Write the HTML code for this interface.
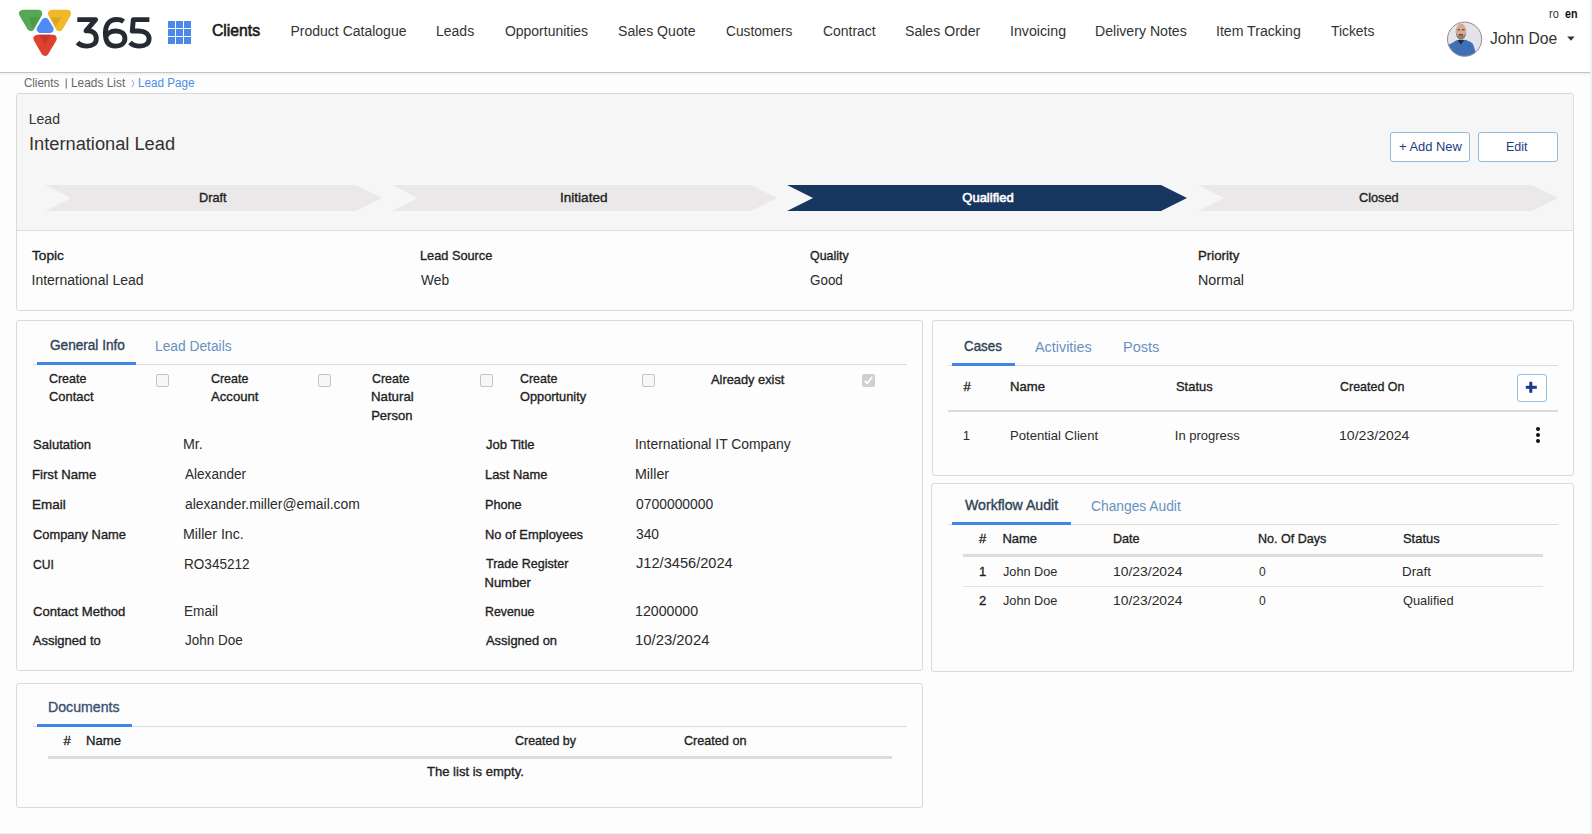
<!DOCTYPE html>
<html><head><meta charset="utf-8"><title>Lead Page</title>
<style>
html,body{margin:0;padding:0;}
body{width:1592px;height:834px;overflow:hidden;position:relative;background:#fdfdfd;font-family:"Liberation Sans",sans-serif;}
.t{position:absolute;white-space:nowrap;line-height:1;transform-origin:0 0;}
.box{position:absolute;box-sizing:border-box;}
.cb{position:absolute;box-sizing:border-box;width:13px;height:13px;background:#f7f7f7;border:1px solid #c4c4c4;border-radius:2px;top:374px;}
</style></head><body>
<!-- header -->
<div class="box" style="left:0;top:0;width:1590px;height:73px;background:#fff;border-bottom:1px solid #c4c4c4;box-shadow:0 1px 3px rgba(0,0,0,.09)"></div>
<div class="box" style="left:1590px;top:0;width:2px;height:834px;background:#e9f4f4"></div>
<div class="box" style="left:0;top:833px;width:1592px;height:1px;background:#e9f4f4"></div>
<svg class="box" style="left:0;top:0" width="200" height="70" viewBox="0 0 200 70">
 <g stroke-linejoin="round" stroke-width="8">
  <polygon points="23.1,13.7 38.2,13.7 30.8,27" fill="#56a856" stroke="#56a856"/>
  <polygon points="52,13.7 67,13.7 59.3,27" fill="#f1b829" stroke="#f1b829"/>
  <polygon points="45.2,21.9 40.8,29 49.6,29" fill="#4e8bf5" stroke="#4e8bf5"/>
  <polygon points="37.5,38.7 52.7,38.7 45,51.8" fill="#de4130" stroke="#de4130"/>
 </g>
 <polygon points="28.8,17.2 39.9,17.2 32.6,28.2" fill="#4d9a4b"/>
 <polygon points="50.4,17.2 61.8,17.2 55.6,27" fill="#dba623"/>
 <polygon points="39,34.8 50.9,34.8 45,44.6" fill="#c9362c"/>
 <g fill="none" stroke="#252a33" stroke-width="4.9" stroke-linejoin="round">
  <path d="M77.3,19.6 H95.6 L86,30.8 H87.4 C93.6,30.8 96.3,34.2 96.3,38.7 C96.3,43.4 92.6,46.1 87,46.1 C82.8,46.1 79.6,44.8 77.5,42.5"/>
  <path d="M123.6,21.4 C121.4,19.8 118.8,19.5 116.4,19.5 C109.2,19.5 105.4,25 105.4,33.5 C105.4,42.5 109.5,46.1 115.3,46.1 C121.3,46.1 124.9,42.8 124.9,38.4 C124.9,33.8 121.3,31 116,31 C110.6,31 106.3,33.8 105.6,38"/>
  <path d="M149.4,19.6 H133.3 L132.3,31 H137.8 C145.3,31 149.1,34.2 149.1,38.7 C149.1,43.4 145.4,46.1 139.7,46.1 C135.5,46.1 132.2,44.8 130,42.5"/>
 </g>
 <g fill="#4a88ea">
  <rect x="168" y="21" width="7" height="7"/><rect x="176" y="21" width="7" height="7"/><rect x="184" y="21" width="7" height="7"/>
  <rect x="168" y="29" width="7" height="7"/><rect x="176" y="29" width="7" height="7"/><rect x="184" y="29" width="7" height="7"/>
  <rect x="168" y="37" width="7" height="7"/><rect x="176" y="37" width="7" height="7"/><rect x="184" y="37" width="7" height="7"/>
 </g>
</svg>
<!-- avatar -->
<svg class="box" style="left:1446px;top:21px" width="37" height="37" viewBox="0 0 37 37">
 <defs><clipPath id="cp"><circle cx="18.6" cy="18.2" r="17.1"/></clipPath></defs>
 <g clip-path="url(#cp)">
  <rect width="37" height="37" fill="#e4e3ea"/>
  <path d="M0,37 L1,24.5 Q5,23 10.5,19.3 L15,19.8 L19.5,18.8 Q25,20.8 26.8,22.8 Q28.6,27 29.6,31.5 L29.8,37 Z" fill="#3f6fb5"/>
  <rect x="12.6" y="15" width="4.8" height="5" fill="#c29a84"/><polygon points="11.4,19 14.8,23.4 18.3,19" fill="#1f2c44"/>
  <ellipse cx="15" cy="10.4" rx="5.3" ry="7.8" fill="#d6ab92"/>
  <path d="M9.8,11.5 Q10.2,18.3 15,18.3 Q19.8,18.3 20.2,11.5 Q19,15 15,15 Q11,15 9.8,11.5Z" fill="#8a7c76"/>
  <rect x="11.5" y="8.3" width="2.6" height="1" fill="#4a3a32"/><rect x="16" y="8.3" width="2.6" height="1" fill="#4a3a32"/>
  <rect x="13" y="13.2" width="4" height="1.2" fill="#3a2a24"/>
 </g>
 <circle cx="18.6" cy="18.2" r="17.1" fill="none" stroke="#8c8c8c" stroke-width="1"/>
</svg>
<svg class="box" style="left:1566px;top:36px" width="10" height="6"><polygon points="1.2,0.6 8.6,0.6 4.9,4.8" fill="#333"/></svg>

<svg class="box" style="left:60px;top:74px" width="80" height="18"><rect x="5.6" y="4.5" width="1.3" height="10" fill="#8a8a8a"/><polyline points="71.8,5.8 74,9.5 71.8,13.2" fill="none" stroke="#a4a4e4" stroke-width="1"/></svg>
<!-- card 1 -->
<div class="box" style="left:16px;top:93px;width:1558px;height:218px;background:#fdfdfd;border:1px solid #dadada;border-radius:3px"></div>
<div class="box" style="left:17px;top:94px;width:1556px;height:137px;background:#f6f6f6;border-bottom:1px solid #dcdcdc;border-radius:2px 2px 0 0"></div>
<div class="box" style="left:1390px;top:132px;width:80px;height:30px;background:#fff;border:1px solid #8cbad9;border-radius:3px"></div>
<div class="box" style="left:1478px;top:132px;width:80px;height:30px;background:#fff;border:1px solid #8cbad9;border-radius:3px"></div>
<svg class="box" style="left:0;top:0" width="1592" height="240"><polygon points="45,185 356,185 382,198 356,211 45,211 71,198" fill="#eae8e9"/><polygon points="392,185 751,185 777,198 751,211 392,211 418,198" fill="#eae8e9"/><polygon points="787,185 1161,185 1187,198 1161,211 787,211 813,198" fill="#173660"/><polygon points="1198,185 1532,185 1558,198 1532,211 1198,211 1224,198" fill="#eae8e9"/></svg>

<!-- card 2 general info -->
<div class="box" style="left:16px;top:320px;width:907px;height:351px;background:#fdfdfd;border:1px solid #dadada;border-radius:3px"></div>
<div class="box" style="left:33px;top:364px;width:874px;height:1px;background:#dcdcdc"></div>
<div class="box" style="left:37px;top:362px;width:99px;height:3px;background:#3f86e6"></div>
<div class="cb" style="left:156px"></div>
<div class="cb" style="left:318px"></div>
<div class="cb" style="left:480px"></div>
<div class="cb" style="left:642px"></div>
<div class="cb" style="left:862px;background:#cfcfcf;border-color:#cfcfcf"></div>
<svg class="box" style="left:862px;top:374px" width="13" height="13"><polyline points="2.8,6.8 5.2,9.3 10.2,3" fill="none" stroke="#fff" stroke-width="1.8"/></svg>

<!-- cases card -->
<div class="box" style="left:932px;top:320px;width:642px;height:156px;background:#fdfdfd;border:1px solid #dadada;border-radius:3px"></div>
<div class="box" style="left:948px;top:365px;width:610px;height:1px;background:#dcdcdc"></div>
<div class="box" style="left:952px;top:363px;width:63px;height:3px;background:#3f86e6"></div>
<div class="box" style="left:948px;top:410px;width:610px;height:2px;background:#dcdcdc"></div>
<div class="box" style="left:1517px;top:374px;width:30px;height:28px;background:#fff;border:1px solid #8ec0e0;border-radius:3px"></div>
<svg class="box" style="left:1525px;top:381px" width="13" height="13"><rect x="4.3" y="0.8" width="3" height="11" fill="#1b3a8a"/><rect x="0.8" y="4.8" width="11" height="3" fill="#1b3a8a"/></svg>
<svg class="box" style="left:1533px;top:424px" width="10" height="22"><circle cx="5" cy="5" r="2" fill="#111"/><circle cx="5" cy="11" r="2" fill="#111"/><circle cx="5" cy="17" r="2" fill="#111"/></svg>

<!-- workflow audit -->
<div class="box" style="left:931px;top:483px;width:643px;height:189px;background:#fdfdfd;border:1px solid #dadada;border-radius:3px"></div>
<div class="box" style="left:948px;top:524px;width:610px;height:1px;background:#dcdcdc"></div>
<div class="box" style="left:952px;top:522px;width:119px;height:3px;background:#3f86e6"></div>
<div class="box" style="left:963px;top:554px;width:580px;height:3px;background:#dcdcdc"></div>
<div class="box" style="left:963px;top:586px;width:580px;height:1px;background:#e2e2e2"></div>

<!-- documents -->
<div class="box" style="left:16px;top:683px;width:907px;height:125px;background:#fdfdfd;border:1px solid #dadada;border-radius:3px"></div>
<div class="box" style="left:33px;top:726px;width:874px;height:1px;background:#dcdcdc"></div>
<div class="box" style="left:37px;top:724px;width:95px;height:3px;background:#3f86e6"></div>
<div class="box" style="left:48px;top:756px;width:844px;height:3px;background:#dcdcdc"></div>

<span class="t" style="left:212.40px;top:23.0px;font-size:16px;color:#1a1a1a;-webkit-text-stroke:0.6px #1a1a1a;transform:scaleX(0.9816);">Clients</span>
<span class="t" style="left:290.50px;top:24.0px;font-size:14px;color:#333;">Product Catalogue</span>
<span class="t" style="left:436.00px;top:24.0px;font-size:14px;color:#333;">Leads</span>
<span class="t" style="left:505.00px;top:24.0px;font-size:14px;color:#333;transform:scaleX(0.9964);">Opportunities</span>
<span class="t" style="left:617.59px;top:24.0px;font-size:14px;color:#333;transform:scaleX(1.0053);">Sales Quote</span>
<span class="t" style="left:725.70px;top:24.0px;font-size:14px;color:#333;transform:scaleX(0.9809);">Customers</span>
<span class="t" style="left:823.30px;top:24.0px;font-size:14px;color:#333;transform:scaleX(0.9943);">Contract</span>
<span class="t" style="left:904.99px;top:24.0px;font-size:14px;color:#333;transform:scaleX(1.0068);">Sales Order</span>
<span class="t" style="left:1009.99px;top:24.0px;font-size:14px;color:#333;transform:scaleX(1.0148);">Invoicing</span>
<span class="t" style="left:1094.99px;top:24.0px;font-size:14px;color:#333;transform:scaleX(1.0078);">Delivery Notes</span>
<span class="t" style="left:1215.79px;top:24.0px;font-size:14px;color:#333;transform:scaleX(1.0084);">Item Tracking</span>
<span class="t" style="left:1331.00px;top:24.0px;font-size:14px;color:#333;transform:scaleX(0.9886);">Tickets</span>
<span class="t" style="left:1490.00px;top:31.0px;font-size:16px;color:#333;transform:scaleX(0.9809);">John Doe</span>
<span class="t" style="left:1548.60px;top:8.0px;font-size:12px;color:#333;transform:scaleX(0.9091);">ro</span>
<span class="t" style="left:1565.00px;top:8.0px;font-size:12px;color:#111;font-weight:700;transform:scaleX(0.8929);">en</span>
<span class="t" style="left:24.30px;top:76.5px;font-size:12px;color:#666;transform:scaleX(0.9595);">Clients</span>
<span class="t" style="left:71.21px;top:76.5px;font-size:12px;color:#666;transform:scaleX(0.9907);">Leads List</span>
<span class="t" style="left:137.73px;top:76.5px;font-size:12px;color:#4a8fe7;transform:scaleX(0.9719);">Lead Page</span>
<span class="t" style="left:28.80px;top:112.0px;font-size:14px;color:#333;">Lead</span>
<span class="t" style="left:28.79px;top:134.6px;font-size:18px;color:#333;transform:scaleX(1.0134);">International Lead</span>
<span class="t" style="left:1399.10px;top:140.0px;font-size:13px;color:#1e3c82;transform:scaleX(0.9937);">+ Add New</span>
<span class="t" style="left:1506.34px;top:140.0px;font-size:13px;color:#1e3c82;transform:scaleX(0.9591);">Edit</span>
<span class="t" style="left:198.62px;top:191.3px;font-size:13px;color:#222;-webkit-text-stroke:0.35px #222;transform:scaleX(0.9786);">Draft</span>
<span class="t" style="left:560.46px;top:191.3px;font-size:13px;color:#222;-webkit-text-stroke:0.35px #222;transform:scaleX(1.0432);">Initiated</span>
<span class="t" style="left:962.30px;top:191.3px;font-size:13px;color:#fff;-webkit-text-stroke:0.6px #fff;">Qualified</span>
<span class="t" style="left:1358.60px;top:191.0px;font-size:13px;color:#222;-webkit-text-stroke:0.35px #222;transform:scaleX(0.9800);">Closed</span>
<span class="t" style="left:32.10px;top:249.3px;font-size:13px;color:#1f1f1f;-webkit-text-stroke:0.35px #1f1f1f;transform:scaleX(1.0500);">Topic</span>
<span class="t" style="left:31.50px;top:273.0px;font-size:14px;color:#2b2b2b;">International Lead</span>
<span class="t" style="left:420.02px;top:249.3px;font-size:13px;color:#1f1f1f;-webkit-text-stroke:0.35px #1f1f1f;transform:scaleX(0.9808);">Lead Source</span>
<span class="t" style="left:421.00px;top:273.0px;font-size:14px;color:#2b2b2b;transform:scaleX(0.9821);">Web</span>
<span class="t" style="left:810.40px;top:249.3px;font-size:13px;color:#1f1f1f;-webkit-text-stroke:0.35px #1f1f1f;transform:scaleX(0.9561);">Quality</span>
<span class="t" style="left:810.40px;top:273.0px;font-size:14px;color:#2b2b2b;transform:scaleX(0.9588);">Good</span>
<span class="t" style="left:1198.48px;top:249.3px;font-size:13px;color:#1f1f1f;-webkit-text-stroke:0.35px #1f1f1f;transform:scaleX(1.0200);">Priority</span>
<span class="t" style="left:1198.48px;top:273.0px;font-size:14px;color:#2b2b2b;transform:scaleX(1.0205);">Normal</span>
<span class="t" style="left:49.50px;top:338.0px;font-size:14px;color:#2f4254;-webkit-text-stroke:0.35px #2f4254;transform:scaleX(0.9714);">General Info</span>
<span class="t" style="left:155.02px;top:338.8px;font-size:14px;color:#6a90c0;transform:scaleX(0.9844);">Lead Details</span>
<span class="t" style="left:48.50px;top:372.3px;font-size:13px;color:#1f1f1f;-webkit-text-stroke:0.35px #1f1f1f;transform:scaleX(0.9564);">Create</span>
<span class="t" style="left:48.50px;top:389.9px;font-size:13px;color:#1f1f1f;-webkit-text-stroke:0.35px #1f1f1f;transform:scaleX(0.9956);">Contact</span>
<span class="t" style="left:210.50px;top:372.3px;font-size:13px;color:#1f1f1f;-webkit-text-stroke:0.35px #1f1f1f;transform:scaleX(0.9564);">Create</span>
<span class="t" style="left:210.50px;top:389.9px;font-size:13px;color:#1f1f1f;-webkit-text-stroke:0.35px #1f1f1f;transform:scaleX(1.0106);">Account</span>
<span class="t" style="left:372.20px;top:372.3px;font-size:13px;color:#1f1f1f;-webkit-text-stroke:0.35px #1f1f1f;transform:scaleX(0.9564);">Create</span>
<span class="t" style="left:371.18px;top:389.9px;font-size:13px;color:#1f1f1f;-webkit-text-stroke:0.35px #1f1f1f;transform:scaleX(1.0195);">Natural</span>
<span class="t" style="left:371.20px;top:409.1px;font-size:13px;color:#1f1f1f;-webkit-text-stroke:0.35px #1f1f1f;">Person</span>
<span class="t" style="left:519.80px;top:372.3px;font-size:13px;color:#1f1f1f;-webkit-text-stroke:0.35px #1f1f1f;transform:scaleX(0.9564);">Create</span>
<span class="t" style="left:519.80px;top:389.9px;font-size:13px;color:#1f1f1f;-webkit-text-stroke:0.35px #1f1f1f;transform:scaleX(0.9838);">Opportunity</span>
<span class="t" style="left:711.00px;top:372.9px;font-size:13px;color:#1f1f1f;-webkit-text-stroke:0.35px #1f1f1f;transform:scaleX(0.9867);">Already exist</span>
<span class="t" style="left:32.80px;top:438.1px;font-size:13px;color:#1f1f1f;-webkit-text-stroke:0.35px #1f1f1f;transform:scaleX(1.0052);">Salutation</span>
<span class="t" style="left:183.48px;top:437.1px;font-size:14px;color:#2b2b2b;transform:scaleX(1.0167);">Mr.</span>
<span class="t" style="left:31.79px;top:468.3px;font-size:13px;color:#1f1f1f;-webkit-text-stroke:0.35px #1f1f1f;transform:scaleX(1.0127);">First Name</span>
<span class="t" style="left:184.50px;top:467.3px;font-size:14px;color:#2b2b2b;transform:scaleX(0.9698);">Alexander</span>
<span class="t" style="left:31.76px;top:498.4px;font-size:13px;color:#1f1f1f;-webkit-text-stroke:0.35px #1f1f1f;transform:scaleX(1.0355);">Email</span>
<span class="t" style="left:184.50px;top:497.4px;font-size:14px;color:#2b2b2b;transform:scaleX(0.9932);">alexander.miller@email.com</span>
<span class="t" style="left:32.80px;top:527.6px;font-size:13px;color:#1f1f1f;-webkit-text-stroke:0.35px #1f1f1f;transform:scaleX(0.9894);">Company Name</span>
<span class="t" style="left:183.48px;top:526.6px;font-size:14px;color:#2b2b2b;transform:scaleX(1.0155);">Miller Inc.</span>
<span class="t" style="left:32.80px;top:557.7px;font-size:13px;color:#1f1f1f;-webkit-text-stroke:0.35px #1f1f1f;transform:scaleX(0.9318);">CUI</span>
<span class="t" style="left:183.53px;top:556.7px;font-size:14px;color:#2b2b2b;transform:scaleX(0.9697);">RO345212</span>
<span class="t" style="left:32.80px;top:604.9px;font-size:13px;color:#1f1f1f;-webkit-text-stroke:0.35px #1f1f1f;transform:scaleX(1.0065);">Contact Method</span>
<span class="t" style="left:183.53px;top:603.9px;font-size:14px;color:#2b2b2b;transform:scaleX(0.9706);">Email</span>
<span class="t" style="left:32.80px;top:633.7px;font-size:13px;color:#1f1f1f;-webkit-text-stroke:0.35px #1f1f1f;">Assigned to</span>
<span class="t" style="left:184.50px;top:632.7px;font-size:14px;color:#2b2b2b;transform:scaleX(0.9633);">John Doe</span>
<span class="t" style="left:485.50px;top:438.0px;font-size:13px;color:#1f1f1f;-webkit-text-stroke:0.35px #1f1f1f;transform:scaleX(1.0041);">Job Title</span>
<span class="t" style="left:635.41px;top:437.0px;font-size:14px;color:#2b2b2b;transform:scaleX(0.9923);">International IT Company</span>
<span class="t" style="left:484.51px;top:468.0px;font-size:13px;color:#1f1f1f;-webkit-text-stroke:0.35px #1f1f1f;transform:scaleX(0.9919);">Last Name</span>
<span class="t" style="left:635.38px;top:467.0px;font-size:14px;color:#2b2b2b;transform:scaleX(1.0182);">Miller</span>
<span class="t" style="left:484.52px;top:498.2px;font-size:13px;color:#1f1f1f;-webkit-text-stroke:0.35px #1f1f1f;transform:scaleX(0.9757);">Phone</span>
<span class="t" style="left:636.40px;top:497.2px;font-size:14px;color:#2b2b2b;transform:scaleX(0.9923);">0700000000</span>
<span class="t" style="left:484.51px;top:527.6px;font-size:13px;color:#1f1f1f;-webkit-text-stroke:0.35px #1f1f1f;transform:scaleX(0.9898);">No of Employees</span>
<span class="t" style="left:636.40px;top:526.6px;font-size:14px;color:#2b2b2b;transform:scaleX(0.9870);">340</span>
<span class="t" style="left:485.50px;top:557.4px;font-size:13px;color:#1f1f1f;-webkit-text-stroke:0.35px #1f1f1f;transform:scaleX(0.9628);">Trade Register</span>
<span class="t" style="left:636.40px;top:556.4px;font-size:14px;color:#2b2b2b;transform:scaleX(1.0441);">J12/3456/2024</span>
<span class="t" style="left:484.55px;top:604.9px;font-size:13px;color:#1f1f1f;-webkit-text-stroke:0.35px #1f1f1f;transform:scaleX(0.9490);">Revenue</span>
<span class="t" style="left:635.39px;top:603.9px;font-size:14px;color:#2b2b2b;transform:scaleX(1.0131);">12000000</span>
<span class="t" style="left:485.50px;top:633.7px;font-size:13px;color:#1f1f1f;-webkit-text-stroke:0.35px #1f1f1f;transform:scaleX(0.9930);">Assigned on</span>
<span class="t" style="left:635.34px;top:632.7px;font-size:14px;color:#2b2b2b;transform:scaleX(1.0623);">10/23/2024</span>
<span class="t" style="left:484.50px;top:575.5px;font-size:13px;color:#1f1f1f;-webkit-text-stroke:0.35px #1f1f1f;">Number</span>
<span class="t" style="left:964.40px;top:339.3px;font-size:14px;color:#2f4254;-webkit-text-stroke:0.35px #2f4254;transform:scaleX(0.9525);">Cases</span>
<span class="t" style="left:1034.50px;top:340.2px;font-size:14px;color:#6a90c0;transform:scaleX(1.0273);">Activities</span>
<span class="t" style="left:1122.56px;top:340.2px;font-size:14px;color:#6a90c0;transform:scaleX(1.0382);">Posts</span>
<span class="t" style="left:963.50px;top:380.2px;font-size:13px;color:#1f1f1f;-webkit-text-stroke:0.35px #1f1f1f;">#</span>
<span class="t" style="left:1010.49px;top:380.2px;font-size:13px;color:#1f1f1f;-webkit-text-stroke:0.35px #1f1f1f;transform:scaleX(1.0088);">Name</span>
<span class="t" style="left:1175.80px;top:380.2px;font-size:13px;color:#1f1f1f;-webkit-text-stroke:0.35px #1f1f1f;transform:scaleX(0.9946);">Status</span>
<span class="t" style="left:1340.40px;top:380.2px;font-size:13px;color:#1f1f1f;-webkit-text-stroke:0.35px #1f1f1f;transform:scaleX(0.9582);">Created On</span>
<span class="t" style="left:962.80px;top:429.2px;font-size:13px;color:#2b2b2b;">1</span>
<span class="t" style="left:1010.49px;top:429.2px;font-size:13px;color:#2b2b2b;transform:scaleX(1.0069);">Potential Client</span>
<span class="t" style="left:1174.80px;top:429.2px;font-size:13px;color:#2b2b2b;">In progress</span>
<span class="t" style="left:1339.32px;top:429.2px;font-size:13px;color:#2b2b2b;transform:scaleX(1.0828);">10/23/2024</span>
<span class="t" style="left:964.80px;top:497.8px;font-size:14px;color:#2f4254;-webkit-text-stroke:0.35px #2f4254;transform:scaleX(1.0086);">Workflow Audit</span>
<span class="t" style="left:1090.50px;top:498.7px;font-size:14px;color:#6a90c0;transform:scaleX(0.9857);">Changes Audit</span>
<span class="t" style="left:978.90px;top:532.1px;font-size:13px;color:#1f1f1f;-webkit-text-stroke:0.35px #1f1f1f;">#</span>
<span class="t" style="left:1002.40px;top:532.1px;font-size:13px;color:#1f1f1f;-webkit-text-stroke:0.35px #1f1f1f;">Name</span>
<span class="t" style="left:1112.63px;top:532.1px;font-size:13px;color:#1f1f1f;-webkit-text-stroke:0.35px #1f1f1f;transform:scaleX(0.9667);">Date</span>
<span class="t" style="left:1257.54px;top:532.1px;font-size:13px;color:#1f1f1f;-webkit-text-stroke:0.35px #1f1f1f;transform:scaleX(0.9643);">No. Of Days</span>
<span class="t" style="left:1403.20px;top:532.1px;font-size:13px;color:#1f1f1f;-webkit-text-stroke:0.35px #1f1f1f;transform:scaleX(0.9946);">Status</span>
<span class="t" style="left:978.90px;top:565.1px;font-size:13px;color:#1f1f1f;-webkit-text-stroke:0.35px #1f1f1f;">1</span>
<span class="t" style="left:1003.40px;top:565.1px;font-size:13px;color:#2b2b2b;transform:scaleX(0.9768);">John Doe</span>
<span class="t" style="left:1112.53px;top:565.1px;font-size:13px;color:#2b2b2b;transform:scaleX(1.0688);">10/23/2024</span>
<span class="t" style="left:1258.50px;top:565.1px;font-size:13px;color:#2b2b2b;transform:scaleX(0.9286);">0</span>
<span class="t" style="left:1402.17px;top:565.1px;font-size:13px;color:#2b2b2b;transform:scaleX(1.0296);">Draft</span>
<span class="t" style="left:978.90px;top:594.0px;font-size:13px;color:#1f1f1f;-webkit-text-stroke:0.35px #1f1f1f;">2</span>
<span class="t" style="left:1003.40px;top:594.0px;font-size:13px;color:#2b2b2b;transform:scaleX(0.9768);">John Doe</span>
<span class="t" style="left:1112.53px;top:594.0px;font-size:13px;color:#2b2b2b;transform:scaleX(1.0688);">10/23/2024</span>
<span class="t" style="left:1258.50px;top:594.0px;font-size:13px;color:#2b2b2b;transform:scaleX(0.9286);">0</span>
<span class="t" style="left:1403.20px;top:594.0px;font-size:13px;color:#2b2b2b;transform:scaleX(0.9863);">Qualified</span>
<span class="t" style="left:48.39px;top:700.2px;font-size:14px;color:#3a5272;-webkit-text-stroke:0.35px #3a5272;transform:scaleX(1.0100);">Documents</span>
<span class="t" style="left:63.50px;top:734.0px;font-size:13px;color:#1f1f1f;-webkit-text-stroke:0.35px #1f1f1f;">#</span>
<span class="t" style="left:86.09px;top:734.0px;font-size:13px;color:#1f1f1f;-webkit-text-stroke:0.35px #1f1f1f;transform:scaleX(1.0088);">Name</span>
<span class="t" style="left:515.20px;top:734.0px;font-size:13px;color:#1f1f1f;-webkit-text-stroke:0.35px #1f1f1f;transform:scaleX(0.9594);">Created by</span>
<span class="t" style="left:683.70px;top:734.0px;font-size:13px;color:#1f1f1f;-webkit-text-stroke:0.35px #1f1f1f;transform:scaleX(0.9703);">Created on</span>
<span class="t" style="left:427.00px;top:765.3px;font-size:13px;color:#1f1f1f;-webkit-text-stroke:0.35px #1f1f1f;transform:scaleX(1.0031);">The list is empty.</span>
</body></html>
